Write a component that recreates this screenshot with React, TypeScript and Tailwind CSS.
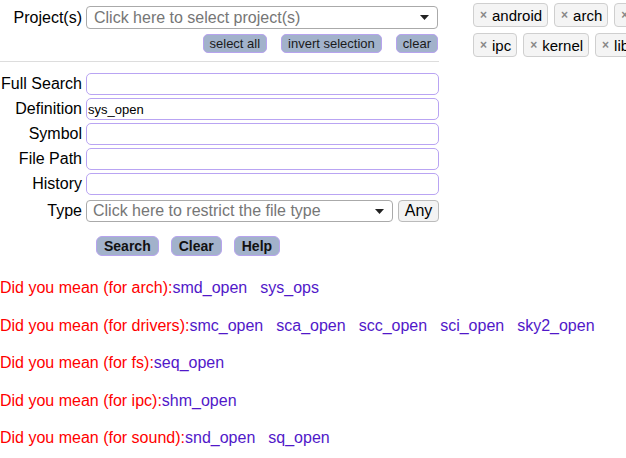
import React from "react";

const Arrow = () => (
  <svg width="9" height="5" viewBox="0 0 9 5" className="shrink-0">
    <path d="M0 0 L9 0 L4.5 5 Z" fill="#222" />
  </svg>
);

const Chip = ({ label }: { label: string }) => (
  <div className="flex items-center h-[24px] pl-[6px] pr-[5px] gap-[5px] bg-[#f4f4f4] border border-[#cfcfcf] rounded-[4px] whitespace-nowrap shrink-0">
    <span className="text-[#888] text-[12px] font-bold leading-none">×</span>
    <span className="text-[15px] leading-none text-black">{label}</span>
  </div>
);

const SmallBtn = ({ label }: { label: string }) => (
  <div className="h-[19px] px-[6px] flex items-center bg-[#a2b2cb] border border-[#b7a3ee] rounded-[5px] text-[13px] text-[#1a1a1a] leading-none whitespace-nowrap">
    {label}
  </div>
);

const BigBtn = ({ label }: { label: string }) => (
  <div className="h-[20px] px-[7px] flex items-center bg-[#a2b2cb] border border-[#b7a3ee] rounded-[6px] text-[14px] font-bold text-[#111] leading-none">
    {label}
  </div>
);

const Row = ({ label, value }: { label: string; value?: string }) => (
  <div className="flex items-center h-[22px]">
    <div className="w-[82px] text-right whitespace-nowrap leading-none">{label}</div>
    <div className="ml-[4px] w-[353px] h-[22px] border border-[#b9a4f3] rounded-[5px] flex items-center pl-[1px] text-[13px] leading-none">
      {value}
    </div>
  </div>
);

const Suggest = ({ scope, items }: { scope: string; items: string[] }) => (
  <div className="flex h-[18px] items-center leading-none whitespace-nowrap text-[16px]">
    <span className="text-[#ff0000]">Did you mean (for {scope}):</span>
    {items.map((it, i) => (
      <span key={it} className={`text-[#5118c9] ${i > 0 ? "ml-[13px]" : ""}`}>
        {it}
      </span>
    ))}
  </div>
);

export default function App() {
  return (
    <div className="w-[626px] h-[458px] overflow-hidden bg-white text-black text-[16px] font-['Liberation_Sans',Arial,sans-serif]">
      <div className="flex">
        <div className="w-[440px] shrink-0">
          <div className="flex items-center h-[23px] mt-[6px]">
            <div className="w-[82px] text-right leading-none">Project(s)</div>
            <div className="ml-[4px] w-[352px] h-[23px] border border-[#aaa] rounded-[4px] flex items-center pl-[7px] pr-[8px] justify-between">
              <span className="text-[#767676] leading-none">Click here to select project(s)</span>
              <Arrow />
            </div>
          </div>
          <div className="flex justify-end gap-[14px] mt-[5px] pr-[2px]">
            <SmallBtn label="select all" />
            <SmallBtn label="invert selection" />
            <SmallBtn label="clear" />
          </div>
          <div className="mt-[8px] w-[439px] h-[1px] bg-[#ddd]" />
          <div className="flex flex-col gap-[3px] mt-[11px]">
            <Row label="Full Search" />
            <Row label="Definition" value="sys_open" />
            <Row label="Symbol" />
            <Row label="File Path" />
            <Row label="History" />
            <div className="flex items-center h-[22px] mt-[2px]">
              <div className="w-[82px] text-right leading-none">Type</div>
              <div className="ml-[4px] w-[307px] h-[22px] border border-[#aaa] rounded-[4px] flex items-center pl-[6px] pr-[8px] justify-between">
                <span className="text-[#767676] leading-none">Click here to restrict the file type</span>
                <Arrow />
              </div>
              <div className="ml-[5px] w-[41px] h-[22px] bg-[#f3f3f3] border border-[#bbb] rounded-[4px] flex items-center justify-center leading-none">
                Any
              </div>
            </div>
          </div>
          <div className="flex gap-[12px] ml-[96px] mt-[14px]">
            <BigBtn label="Search" />
            <BigBtn label="Clear" />
            <BigBtn label="Help" />
          </div>
        </div>
        <div className="ml-[33px] mt-[3px] flex flex-col gap-[6px]">
          <div className="flex gap-[6px]">
            <Chip label="android" />
            <Chip label="arch" />
            <Chip label="drivers" />
          </div>
          <div className="flex gap-[6px]">
            <Chip label="ipc" />
            <Chip label="kernel" />
            <Chip label="lib" />
          </div>
        </div>
      </div>
      <div className="flex flex-col gap-[19.5px] mt-[23px]">
        <Suggest scope="arch" items={["smd_open", "sys_ops"]} />
        <Suggest scope="drivers" items={["smc_open", "sca_open", "scc_open", "sci_open", "sky2_open"]} />
        <Suggest scope="fs" items={["seq_open"]} />
        <Suggest scope="ipc" items={["shm_open"]} />
        <Suggest scope="sound" items={["snd_open", "sq_open"]} />
      </div>
    </div>
  );
}
